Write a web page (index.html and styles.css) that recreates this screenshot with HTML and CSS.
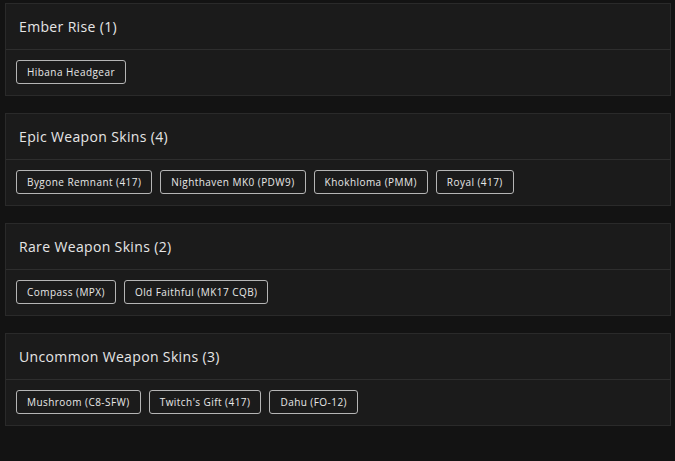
FILE: index.html
```html
<!DOCTYPE html>
<html lang="en">
<head>
    <meta charset="UTF-8">
    <meta name="viewport" content="width=device-width, initial-scale=1.0">
    <title>Skins</title>
    <link rel="stylesheet" href="styles.css">
</head>
<body>
    <div class="list">
        <div class="group">
            <div class="group-head">Ember Rise (1)</div>
            <div class="group-body">
                <span class="tag">Hibana Headgear</span>
            </div>
        </div>

        <div class="group">
            <div class="group-head">Epic Weapon Skins (4)</div>
            <div class="group-body">
                <span class="tag">Bygone Remnant (417)</span>
                <span class="tag">Nighthaven MK0 (PDW9)</span>
                <span class="tag">Khokhloma (PMM)</span>
                <span class="tag">Royal (417)</span>
            </div>
        </div>

        <div class="group">
            <div class="group-head">Rare Weapon Skins (2)</div>
            <div class="group-body">
                <span class="tag">Compass (MPX)</span>
                <span class="tag">Old Faithful (MK17 CQB)</span>
            </div>
        </div>

        <div class="group">
            <div class="group-head">Uncommon Weapon Skins (3)</div>
            <div class="group-body">
                <span class="tag">Mushroom (C8-SFW)</span>
                <span class="tag">Twitch's Gift (417)</span>
                <span class="tag">Dahu (FO-12)</span>
            </div>
        </div>
    </div>
</body>
</html>
```

FILE: styles.css
```css
body { margin: 0; padding: 3px 4px 0 5px; background: #131313; color: #e6e6e6; font-family: "Open Sans", sans-serif; }
.list { display: flex; flex-direction: column; gap: 17px; }
.group { background: #1b1b1b; border: 1px solid #2a2a2a; }
.group-head { height: 45px; display: flex; align-items: center; padding-left: 13px; font-size: 14px; letter-spacing: 0.35px; border-bottom: 1px solid #2e2e2e; }
.group-body { display: flex; gap: 8px; padding: 10px 10px 11px; }
.tag { box-sizing: border-box; display: inline-flex; align-items: center; height: 24px; padding: 0 10px; border: 1px solid #b5b5b5; border-radius: 3px; font-size: 10px; letter-spacing: 0.45px; color: #e8e8e8; }
```
